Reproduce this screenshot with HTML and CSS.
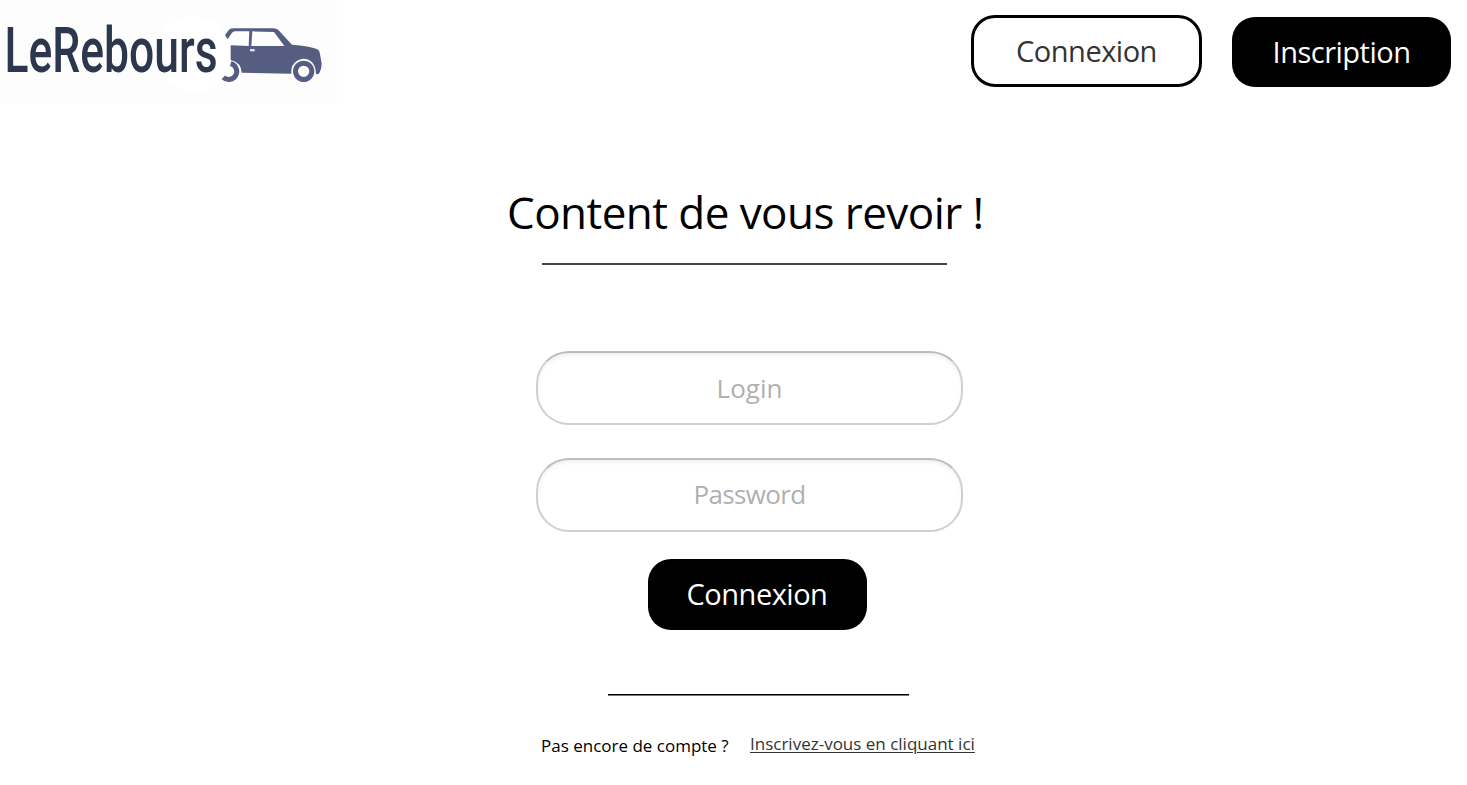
FILE: index.html
```html
<!DOCTYPE html>
<html lang="fr">
<head>
<meta charset="utf-8">
<title>LeRebours - Connexion</title>
<link rel="stylesheet" href="styles.css">
</head>
<body>
<header class="header">
  <svg class="logo" viewBox="0 0 337 104" role="img" aria-label="LeRebours">
    <rect width="337" height="104" fill="#fdfdfd"/>
    <circle cx="193" cy="54" r="38" fill="#fff"/>
    <text class="logo-text" x="0" y="0" transform="translate(4.500 72) scale(1 1.54)" textLength="213" lengthAdjust="spacingAndGlyphs">LeRebours</text>
    <g transform="translate(210 15) scale(.33333)">
      <path fill="#555d80" fill-rule="evenodd" d="M45 60L57 44Q62 40 72 40L190 40Q199 40 205 45L246 89Q300 93 320 102Q329 105 330 118L335 145Q335 164 326 177L318 178Q318 150 302 138Q280 124 259 139Q242 151 244 176L95 173Q94 143 62 135L62 91L116 93L118 49L74 49Q68 50 64 56L53 73ZM127 49L124 93L223 93L192 51Z"/>
      <path fill="#e2e3eb" d="M120 102h14v7h-14z"/>
      <circle cx="281" cy="169" r="24.500" fill="none" stroke="#555d80" stroke-width="15"/>
      <path d="M62 146A24 24 0 1 1 40 187" fill="none" stroke="#555d80" stroke-width="15"/>
    </g>
  </svg>
  <nav class="nav">
    <a class="btn btn-outline"><span>Connexion</span></a>
    <a class="btn btn-solid"><span class="inscription">Inscription</span></a>
  </nav>
</header>
<main class="main">
  <h1 class="title">Content de vous revoir !</h1>
  <div class="rule rule-top"></div>
  <form class="form">
    <div class="field"><span class="login">Login</span></div>
    <div class="field"><span class="password">Password</span></div>
    <div class="btn btn-solid btn-submit"><span>Connexion</span></div>
  </form>
  <div class="rule rule-bottom"></div>
  <p class="signup"><span class="question">Pas encore de compte ?</span><a class="link">Inscrivez-vous en cliquant ici</a></p>
</main>
</body>
</html>
```
FILE: styles.css
```css
* { box-sizing: border-box; }
body {
  margin: 0;
  width: 1467px;
  height: 785px;
  overflow: hidden;
  background: #fff;
  color: #000;
  font-family: "Open Sans", "Noto Sans", sans-serif;
}
.header { display: flex; justify-content: space-between; height: 104px; }
.logo { display: block; width: 337px; height: 104px; }
.logo-text { font: 500 41px Roboto, sans-serif; fill: #2c374e; }
.nav { display: flex; gap: 30px; padding: 15px 16px 0 0; }
.btn {
  display: flex;
  justify-content: center;
  align-items: center;
  font-size: 29px;
  letter-spacing: -.5px;
  line-height: 40px;
  white-space: nowrap;
}
.btn-outline {
  width: 231px;
  height: 72px;
  border: 3px solid #000;
  border-radius: 24px;
  color: #333;
}
.btn-solid {
  width: 219px;
  height: 70px;
  margin-top: 2px;
  padding-bottom: 1px;
  border-radius: 23px;
  background: #000;
  color: #fff;
}
.main { display: flex; flex-direction: column; }
.title {
  margin: 78px 0 0 507px;
  font-size: 44px;
  font-weight: 400;
  letter-spacing: -.55px;
  line-height: 60px;
  white-space: nowrap;
}
.rule { height: 2px; }
.rule-top { width: 405px; margin: 21px 0 0 542px; background: #444; }
.form { display: flex; flex-direction: column; margin: 86px 0 0 536px; }
.field {
  display: flex;
  justify-content: center;
  align-items: center;
  width: 427px;
  height: 74px;
  margin-bottom: 32.5px;
  border: 2px solid #d0d0d0;
  border-top-color: #bcbcbc;
  border-radius: 33px;
  box-shadow: inset 0 3px 4px -1px #eee;
  color: #b0b0b0;
  font-size: 26px;
  line-height: 36px;
}
.password { letter-spacing: -.65px; margin-top: -1px; }
.btn-submit { height: 70.5px; margin: -5px 0 0 111.5px; padding-bottom: 0; }
.rule-bottom { width: 301px; margin: 64px 0 0 608px; border-bottom: 1px solid #777; background: #000; }
.signup {
  display: flex;
  gap: 20px;
  margin: 36.5px 0 0 541px;
  font-size: 17px;
  line-height: 24px;
  white-space: nowrap;
}
.question { width: 189px; padding-top: 2px; }
.link { color: #333; text-decoration: underline; text-decoration-thickness: 1px; text-underline-offset: 2px; }
```
